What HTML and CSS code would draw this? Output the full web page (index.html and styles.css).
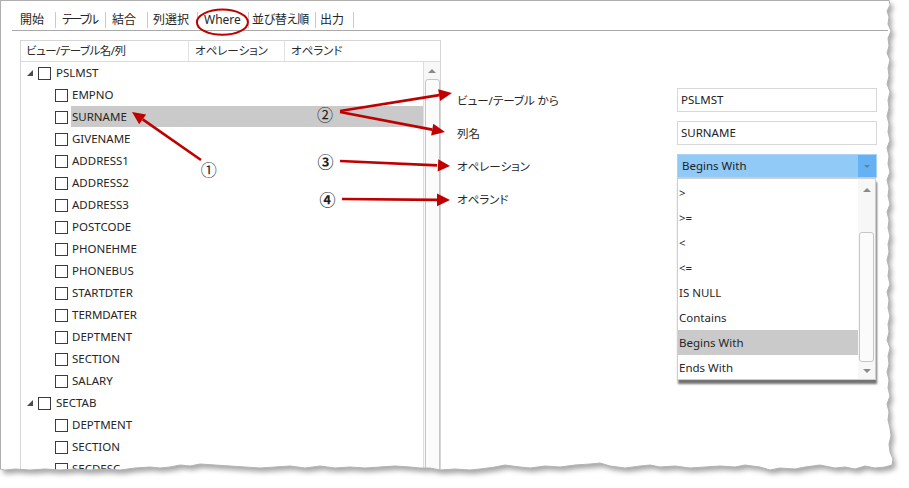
FILE: index.html
```html
<!DOCTYPE html>
<html lang="ja">
<head>
<meta charset="utf-8">
<title>Where</title>
<link rel="stylesheet" href="styles.css">
</head>
<body>
<div class="paper">
  <div class="frame">
    <div class="tabbar">
      <span class="tab t1">開始</span>
      <span class="tab t2">テーブル</span>
      <span class="tab t3">結合</span>
      <span class="tab t4">列選択</span>
      <span class="tab t5">Where</span>
      <span class="tab t6">並び替え順</span>
      <span class="tab t7">出力</span>
    </div>
    <div class="main">
      <div class="tree-panel">
        <div class="tree-head">
          <div class="hcol hcol-1">ビュー/テーブル名/列</div>
          <div class="hcol hcol-2">オペレーション</div>
          <div class="hcol hcol-3">オペランド</div>
        </div>
        <div class="tree-body">
          <div class="rows">
            <div class="row lvl0"><span class="exp"></span><span class="cb"></span><span class="lbl">PSLMST</span></div>
            <div class="row lvl1"><span class="cb"></span><span class="lbl">EMPNO</span></div>
            <div class="row lvl1"><span class="cb"></span><span class="lbl sel">SURNAME</span></div>
            <div class="row lvl1"><span class="cb"></span><span class="lbl">GIVENAME</span></div>
            <div class="row lvl1"><span class="cb"></span><span class="lbl">ADDRESS1</span></div>
            <div class="row lvl1"><span class="cb"></span><span class="lbl">ADDRESS2</span></div>
            <div class="row lvl1"><span class="cb"></span><span class="lbl">ADDRESS3</span></div>
            <div class="row lvl1"><span class="cb"></span><span class="lbl">POSTCODE</span></div>
            <div class="row lvl1"><span class="cb"></span><span class="lbl">PHONEHME</span></div>
            <div class="row lvl1"><span class="cb"></span><span class="lbl">PHONEBUS</span></div>
            <div class="row lvl1"><span class="cb"></span><span class="lbl">STARTDTER</span></div>
            <div class="row lvl1"><span class="cb"></span><span class="lbl">TERMDATER</span></div>
            <div class="row lvl1"><span class="cb"></span><span class="lbl">DEPTMENT</span></div>
            <div class="row lvl1"><span class="cb"></span><span class="lbl">SECTION</span></div>
            <div class="row lvl1"><span class="cb"></span><span class="lbl">SALARY</span></div>
            <div class="row lvl0"><span class="exp"></span><span class="cb"></span><span class="lbl">SECTAB</span></div>
            <div class="row lvl1"><span class="cb"></span><span class="lbl">DEPTMENT</span></div>
            <div class="row lvl1"><span class="cb"></span><span class="lbl">SECTION</span></div>
            <div class="row lvl1"><span class="cb"></span><span class="lbl">SECDESC</span></div>
          </div>
          <div class="vscroll">
            <div class="sb-btn"><span class="arr-up"></span></div>
            <div class="sb-thumb tall"></div>
          </div>
        </div>
      </div>
      <div class="props">
        <div class="form">
          <div class="plabel">ビュー/テーブル から</div>
          <div class="field">PSLMST</div>
          <div class="plabel">列名</div>
          <div class="field">SURNAME</div>
          <div class="plabel">オペレーション</div>
          <div class="combo"><span class="combo-text">Begins With</span><span class="combo-btn"><span class="arr-down"></span></span></div>
          <div class="plabel">オペランド</div>
          <div></div>
        </div>
        <div class="droplist">
          <div class="items">
            <div class="item">&gt;</div>
            <div class="item">&gt;=</div>
            <div class="item">&lt;</div>
            <div class="item">&lt;=</div>
            <div class="item">IS NULL</div>
            <div class="item">Contains</div>
            <div class="item sel">Begins With</div>
            <div class="item">Ends With</div>
          </div>
          <div class="vscroll small">
            <div class="sb-btn up"><span class="arr-up"></span></div>
            <div class="sb-gap"></div>
            <div class="sb-thumb"></div>
            <div class="sb-btn down"><span class="arr-down"></span></div>
          </div>
        </div>
      </div>
    </div>
  </div>

  <svg class="annot" width="909" height="488" viewBox="0 0 909 488">
    <ellipse cx="222.4" cy="22.2" rx="25.5" ry="12.6" fill="none" stroke="#c00000" stroke-width="2"/>
    <g stroke="#c00000" stroke-width="2.6" fill="none">
      <line x1="201" y1="160" x2="142.7" y2="119.4"/>
      <line x1="340" y1="111" x2="439.2" y2="95.1"/>
      <line x1="340" y1="112" x2="432.2" y2="129.6"/>
      <line x1="340" y1="161" x2="437" y2="165.4"/>
      <line x1="342" y1="199" x2="437" y2="199.9"/>
    </g>
    <g fill="#c00000">
      <polygon points="132,112 146.1,114.5 139.2,124.3"/>
      <polygon points="452,93 440.1,101 438.2,89.2"/>
      <polygon points="445,132 431.1,135.5 433.3,123.7"/>
      <polygon points="450,166 437.7,171.6 438.3,159.2"/>
      <polygon points="450,200 437,206.2 437,193.6"/>
    </g>
    <g class="num">
      <text x="208.7" y="169">①</text>
      <text x="325" y="113.5">②</text>
      <text x="325.5" y="161" class="b">③</text>
      <text x="327.5" y="199" class="b">④</text>
    </g>
  </svg>

  <svg class="torn" width="909" height="488" viewBox="0 0 909 488">
    <defs>
      <path id="pp" d="M0,0 L889,0 L890,5 L887,11 L889,17 L888,24 L891,31 L888,38 L889,46 L887,53 L890,60 L888,68 L889,76 L887,84 L890,92 L888,100 L889,108 L887,116 L889,124 L888,132 L890,140 L887,148 L889,156 L888,164 L890,172 L887,180 L889,188 L888,196 L890,204 L887,212 L889,220 L888,228 L890,236 L888,244 L889,252 L887,260 L889,268 L888,276 L890,284 L887,292 L889,300 L888,308 L890,316 L888,324 L889,332 L887,340 L890,348 L888,356 L889,364 L887,372 L889,380 L888,388 L890,396 L887,404 L889,412 L888,420 L890,428 L891,436 L889,444 L890,452 L893,459 L892,465 L885,467 L875,468 L865,466 L855,469 L845,467 L835,468 L820,465 L805,467 L795,469 L780,468 L770,470 L760,467 L745,465 L735,467 L720,466 L705,467 L690,468 L675,466 L660,467 L650,465 L640,466 L625,468 L610,466 L600,463 L590,464 L575,465 L560,467 L545,466 L530,468 L520,467 L505,465 L495,467 L480,469 L470,470 L455,469 L440,470 L430,468 L420,468 L410,467 L395,466 L380,467 L365,468 L350,467 L335,468 L320,466 L305,468 L290,466 L275,467 L260,468 L245,467 L230,466 L215,465 L200,464 L190,466 L180,465 L170,467 L160,468 L150,467 L135,468 L120,470 L105,469 L90,470 L75,469 L60,470 L45,469 L30,470 L15,469 L5,470 L0,469 Z"/>
      <mask id="outside" maskUnits="userSpaceOnUse" x="0" y="0" width="909" height="488">
        <rect x="0" y="0" width="909" height="488" fill="#fff"/>
        <use href="#pp" fill="#000"/>
      </mask>
      <filter id="blur" x="-5%" y="-5%" width="110%" height="110%">
        <feGaussianBlur stdDeviation="2.6"/>
      </filter>
    </defs>
    <g mask="url(#outside)">
      <rect x="0" y="0" width="909" height="488" fill="#fff"/>
      <use href="#pp" transform="translate(3,4)" fill="#8a8a8a" filter="url(#blur)" opacity="0.75"/>
    </g>
    <use href="#pp" fill="none" stroke="#b4b4b4" stroke-width="1"/>
  </svg>
</div>
</body>
</html>
```

FILE: styles.css
```css
* { box-sizing: border-box; }

body {
  margin: 0;
  background: #fff;
  font-family: "Noto Sans", "Noto Sans CJK JP", sans-serif;
  font-size: 11.5px;
  color: #2a2a2a;
  font-feature-settings: "palt";
}

.paper {
  position: relative;
  width: 909px;
  height: 488px;
  overflow: hidden;
  background: #fff;
}

.frame {
  margin: 0;
  width: 900px;
  height: 480px;
  border-top: 1px solid #a9a9a9;
  border-left: 1px solid #a9a9a9;
  padding-left: 1px;
  padding-top: 1px;
}

/* tab bar */
.tabbar {
  margin: 8px 0 0 10px;
  width: 876px;
  height: 21px;
  padding-left: 1px;
  border-bottom: 1px solid #a9a9a9;
  display: flex;
  align-items: center;
}
.tab {
  font-size: 12px;
  line-height: 16px;
  color: #262626;
  border-right: 1px solid #c9c9c9;
  white-space: nowrap;
  flex: none;
  overflow: hidden;
}
.t1 { width: 43px; padding-left: 7px; }
.t2 { width: 50px; padding-left: 6px; letter-spacing: -2.2px; }
.t3 { width: 42px; padding-left: 6px; }
.t4 { width: 50px; padding-left: 5px; }
.t5 { width: 51px; padding-left: 6px; }
.t6 { width: 67px; padding-left: 3px; letter-spacing: -0.3px; }
.t7 { width: 38px; padding-left: 4px; }

/* main area */
.main {
  display: flex;
  margin-top: 9px;
}

.tree-panel {
  margin-left: 18px;
  width: 421px;
  height: 440px;
  border: 1px solid #d6d6d6;
  display: flex;
  flex-direction: column;
}

.tree-head {
  height: 21px;
  border-bottom: 1px solid #dcdcdc;
  display: flex;
}
.hcol {
  line-height: 20px;
  white-space: nowrap;
  color: #2a2a2a;
}
.hcol-1 { width: 168px; padding-left: 5px; border-right: 1px solid #e2e2e2; letter-spacing: -0.5px; }
.hcol-2 { width: 96px; padding-left: 6px; border-right: 1px solid #e2e2e2; }
.hcol-3 { flex: 1; padding-left: 6px; }

.tree-body {
  flex: 1;
  display: flex;
}
.rows { flex: 1; }

.row {
  height: 22px;
  display: flex;
  align-items: center;
}
.row.lvl0 { padding-left: 6px; }
.row.lvl1 { padding-left: 34px; }

.exp {
  width: 0;
  height: 0;
  border-left: 6px solid transparent;
  border-bottom: 6px solid #4a4a4a;
  margin-right: 5px;
  margin-top: -1px;
}
.cb {
  width: 13px;
  height: 13px;
  border: 1px solid #3c3c3c;
  background: #fff;
  flex: none;
}
.lbl {
  flex: 1;
  height: 21px;
  line-height: 21px;
  margin-top: -1px;
  padding-left: 1px;
  color: #262626;
  white-space: nowrap;
}
.lvl0 .lbl { margin-left: 4px; }
.lvl1 .lbl { margin-left: 3px; }
.lbl.sel { background: #cacaca; }

/* scrollbars */
.vscroll {
  width: 17px;
  flex: none;
  border-left: 1px solid #dedede;
  background: #f7f7f7;
  display: flex;
  flex-direction: column;
  align-items: center;
}
.sb-btn {
  height: 17px;
  width: 100%;
  display: flex;
  align-items: center;
  justify-content: center;
  flex: none;
}
.arr-up {
  width: 0;
  height: 0;
  border-left: 4px solid transparent;
  border-right: 4px solid transparent;
  border-bottom: 4px solid #8a8a8a;
}
.arr-down {
  width: 0;
  height: 0;
  border-left: 4px solid transparent;
  border-right: 4px solid transparent;
  border-top: 4px solid #8a8a8a;
}
.sb-thumb {
  width: 15px;
  height: 130px;
  border: 1px solid #c6c6c6;
  border-radius: 3px;
  background: #fbfbfb;
  flex: none;
}
.sb-thumb.tall { height: 400px; }

/* property side */
.props {
  flex: 1;
  position: relative;
  padding: 48px 0 0 16px;
}
.form {
  display: grid;
  grid-template-columns: 220px 200px;
  grid-auto-rows: 24px;
  row-gap: 9px;
  align-items: center;
}
.plabel {
  color: #262626;
  white-space: nowrap;
}
.field {
  height: 24px;
  border: 1px solid #d8d8d8;
  padding-left: 3px;
  line-height: 22px;
  color: #222;
  background: #fff;
}
.combo {
  height: 24px;
  display: flex;
  background: #91c9f7;
  border: 1px solid #a9d2f4;
}
.combo-text {
  flex: 1;
  padding-left: 4px;
  line-height: 22px;
  color: #222;
}
.combo-btn {
  width: 18px;
  background: #64b1f4;
  display: flex;
  align-items: center;
  justify-content: center;
}
.combo-btn .arr-down { border-top-color: #7a7a7a; border-left-width: 3px; border-right-width: 3px; border-top-width: 3px; }

.droplist {
  position: absolute;
  left: 236px;
  top: 138px;
  width: 199px;
  height: 202px;
  border: 1px solid #cfcfcf;
  background: #fff;
  box-shadow: 1px 4px 2px rgba(0, 0, 0, 0.55);
  display: flex;
}
.items {
  flex: 1;
  padding-top: 1px;
}
.item {
  height: 25px;
  line-height: 25px;
  padding-left: 1px;
  color: #262626;
}
.item.sel { background: #cacaca; }

.vscroll.small {
  border-left: none;
  background: #f7f7f7;
}
.vscroll.small .sb-btn.up { height: 22px; }
.vscroll.small .sb-gap { height: 31px; flex: none; }
.vscroll.small .sb-btn.down { flex: 1; }

/* overlays */
.annot {
  position: absolute;
  left: 0;
  top: 0;
  pointer-events: none;
}
.num text {
  font-family: "Noto Sans CJK JP", sans-serif;
  font-size: 16px;
  fill: #1e1e1e;
  text-anchor: middle;
  dominant-baseline: central;
}
.num text.b { font-weight: 700; }

.torn {
  position: absolute;
  left: 0;
  top: 0;
  pointer-events: none;
}
```
